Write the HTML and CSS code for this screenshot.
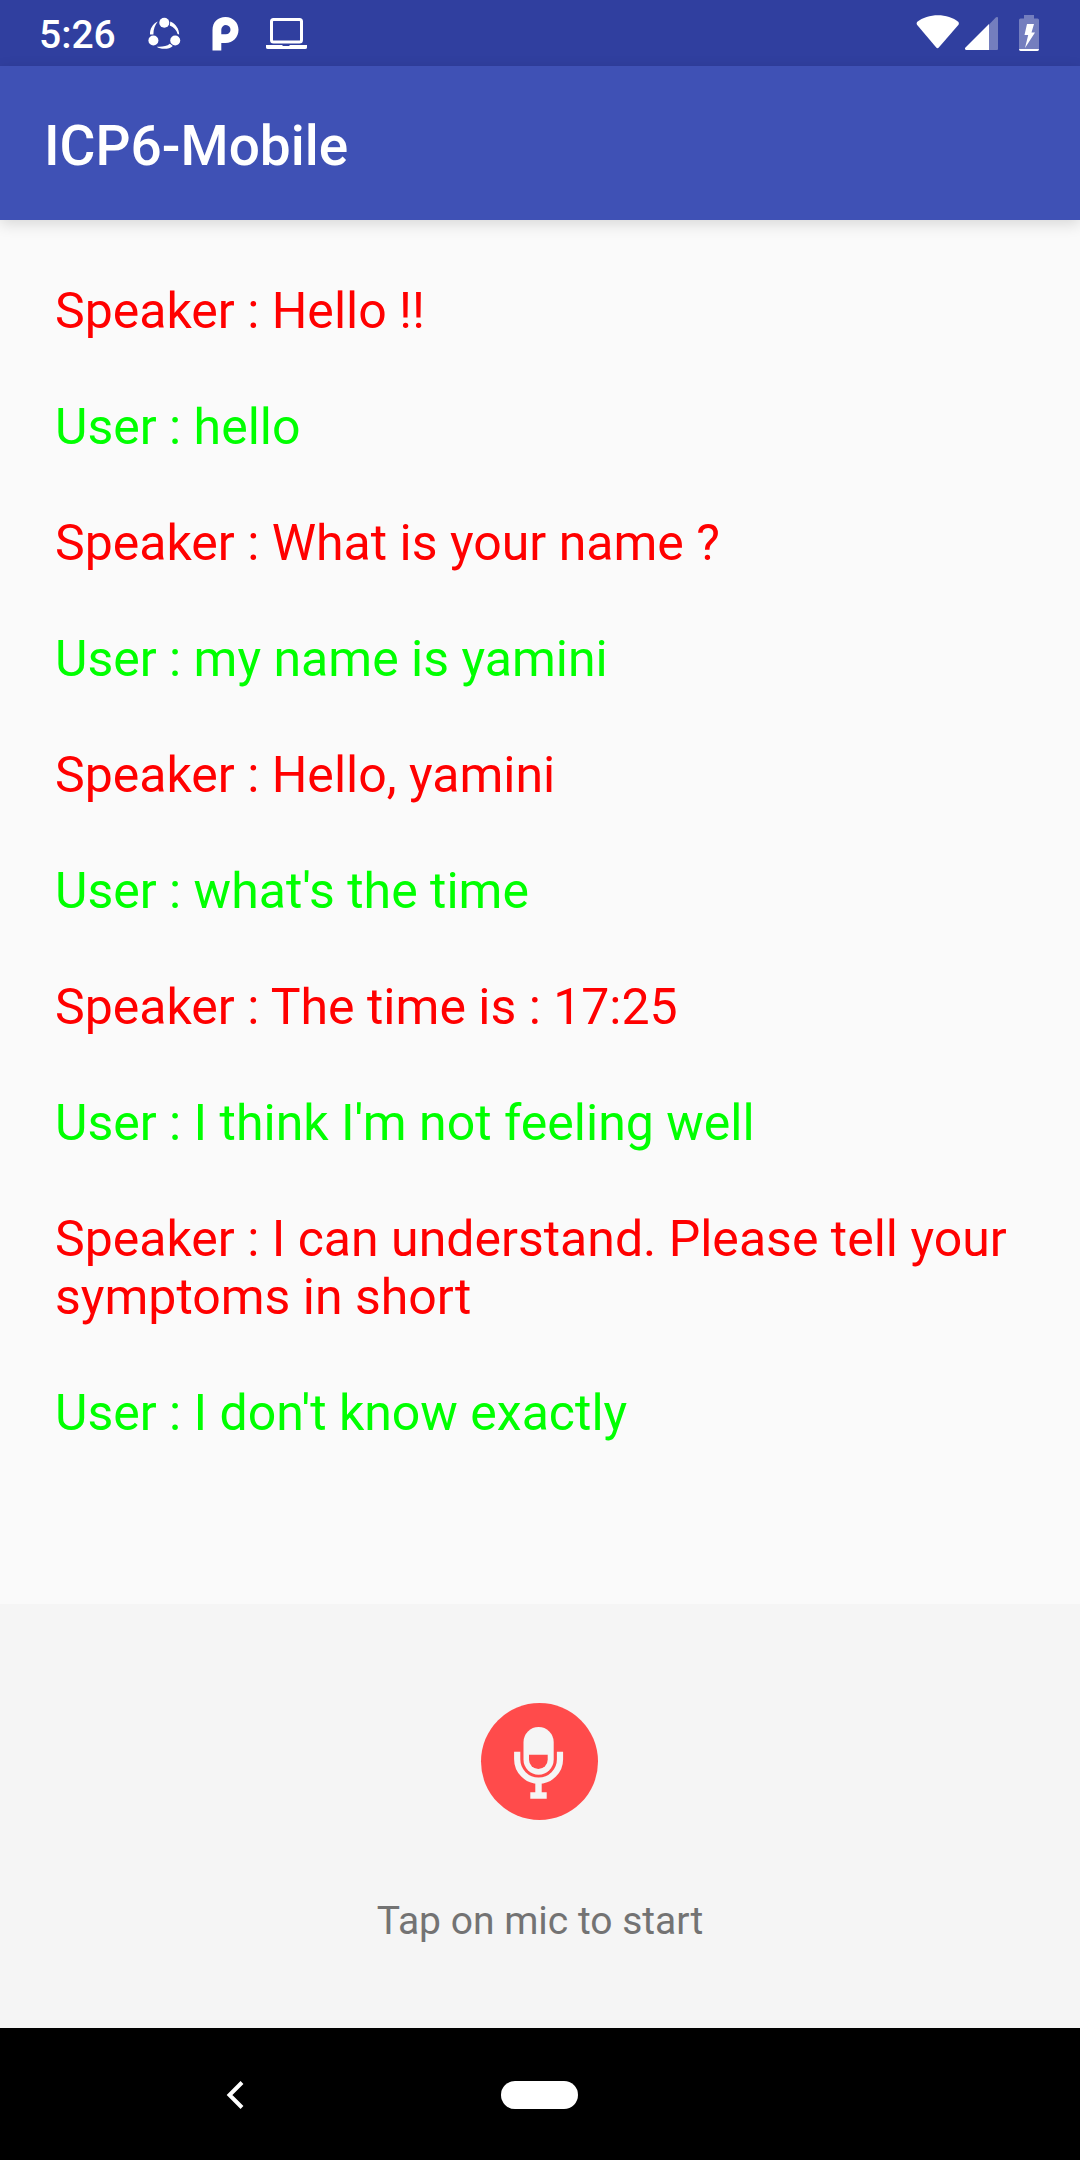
FILE: index.html
```html
<!DOCTYPE html>
<html lang="en">
<head>
  <meta charset="utf-8">
  <meta name="viewport" content="width=device-width, initial-scale=1">
  <title>ICP6-Mobile</title>
  <link rel="stylesheet" href="styles.css">
</head>
<body>
  <div class="status-bar">
    <div class="status-group status-group-left">
      <time class="clock">5:26</time>
      <svg class="status-icon" width="44" height="66" viewBox="142 0 44 66" aria-hidden="true">
        <g fill="#fff">
          <circle cx="164.300" cy="22.700" r="5"/>
          <circle cx="153.400" cy="40.500" r="5"/>
          <circle cx="175.200" cy="40.500" r="5"/>
          <path d="M157.800 21.600C152.500 24.200 149.800 29 150 34.600L153.400 34.600C153.400 29 155 25.200 157.800 21.600Z"/>
          <path d="M170.300 21.600C176 24.200 179 29 179.200 34.600L177.600 34C176.600 30 174 27.200 169.800 25.400Z"/>
          <path d="M156.800 46.700C160 49.700 169.500 49.700 172.800 46L169.800 43.800C166.800 46.600 161.500 47 156.800 46.700Z"/>
        </g>
      </svg>
      <svg class="status-icon" width="28" height="66" viewBox="212 0 28 66" aria-hidden="true">
        <path fill="#fff" fill-rule="evenodd" d="M212.500 50.500V30C212.500 22 218 17 225.500 17C233 17 238.500 22.500 238.500 29.800C238.500 37.500 233 43 225.500 43H221.300V50.500ZM221.300 34.300H225.500A4.600 4.600 0 1 0 221.300 29.800Z"/>
      </svg>
      <svg class="status-icon" width="42" height="66" viewBox="266 0 42 66" aria-hidden="true">
        <rect x="271.500" y="19.500" width="30" height="22.500" rx="2" fill="none" stroke="#fff" stroke-width="3"/>
        <path fill="#fff" d="M266 45H282L283 46H289L290 45H307V47.500Q307 49 305 49H268Q266 49 266 47.500Z"/>
      </svg>
    </div>
    <div class="status-group status-group-right">
      <svg class="status-icon" width="44" height="66" viewBox="916 0 44 66" aria-hidden="true">
        <path fill="#fff" d="M917 22C928 13 948 13 958.500 22Q959.300 23.500 958.500 24.700L939 47.300Q937.500 49 936 47.300L917 24.700Q916.200 23.500 917 22Z"/>
      </svg>
      <svg class="status-icon" width="36" height="66" viewBox="964 0 36 66" aria-hidden="true">
        <path fill="#fff" fill-opacity=".33" d="M989 24.500L996 17.300Q998 16.500 998 18V49Q998 50 997 50H989Z"/>
        <path fill="#fff" d="M989 24V50H966Q964.500 49.500 965 48Z"/>
      </svg>
      <svg class="status-icon" width="36" height="66" viewBox="1004 0 36 66" aria-hidden="true">
        <path fill="#fff" fill-opacity=".33" d="M1024 15H1034V18.500H1037.500Q1039 18.500 1039 20V49H1019V20Q1019 18.500 1020.500 18.500H1024Z"/>
        <path fill="#fff" d="M1019 49H1039Q1039 51 1037.500 51H1020.500Q1019 51 1019 49Z"/>
        <path fill="#fff" d="M1027 24H1034L1031.500 32.500H1035L1025 48L1028.200 35H1024.500Z"/>
      </svg>
    </div>
  </div>

  <header class="app-bar">
    <h1 class="app-title">ICP6-Mobile</h1>
  </header>

  <main class="chat">
    <p class="message speaker">Speaker : Hello !!</p>
    <p class="message user">User : hello</p>
    <p class="message speaker">Speaker : What is your name ?</p>
    <p class="message user">User : my name is yamini</p>
    <p class="message speaker">Speaker : Hello, yamini</p>
    <p class="message user">User : what's the time</p>
    <p class="message speaker">Speaker : The time is : 17:25</p>
    <p class="message user">User : I think I'm not feeling well</p>
    <p class="message speaker">Speaker : I can understand. Please tell your symptoms in short</p>
    <p class="message user">User : I don't know exactly</p>
  </main>

  <section class="mic-panel">
    <button class="mic-button" type="button" aria-labelledby="mic-hint">
      <svg width="120" height="120" viewBox="0 0 120 120" aria-hidden="true">
        <circle cx="59.500" cy="59.500" r="58.500" fill="#ff4b4b"/>
        <rect x="43.500" y="25" width="30.200" height="47.700" rx="15.100" fill="#f5f5f5"/>
        <path fill="#ff4b4b" d="M49 52.700H67.700V57.700A9.350 9.350 0 0 1 49 57.700Z"/>
        <path fill="none" stroke="#f5f5f5" stroke-width="6.200" d="M37.200 49.700V57.300A21.400 21.400 0 0 0 80 57.300V49.700"/>
        <path fill="#f5f5f5" d="M55.300 80H61.700V90.300H66.700V96.700H50.300V90.300H55.300Z"/>
      </svg>
    </button>
    <p class="mic-hint" id="mic-hint">Tap on mic to start</p>
  </section>

  <nav class="nav-bar">
    <button class="nav-button" type="button" aria-label="Back">
      <svg width="20" height="32" viewBox="0 0 20 32" aria-hidden="true">
        <path d="M17 3.500L4.500 16L17 28.500" fill="none" stroke="#fff" stroke-width="4"/>
      </svg>
    </button>
    <button class="nav-button" type="button" aria-label="Home"><span class="home-pill"></span></button>
  </nav>
</body>
</html>
```
FILE: styles.css
```css
* {
  box-sizing: border-box;
}

body {
  margin: 0;
  min-height: 100vh;
  display: flex;
  flex-direction: column;
  background: #fafafa;
  font-family: Roboto, "Liberation Sans", sans-serif;
}

button {
  padding: 0;
  border: 0;
  background: none;
}

svg {
  display: block;
}

.status-bar {
  display: flex;
  justify-content: space-between;
  height: 66px;
  padding: 0 40px 0 39px;
  background: #303f9f;
  color: #fff;
}

.status-group {
  display: flex;
  align-items: center;
}

.status-group-left {
  gap: 26px;
}

.status-group-right {
  gap: 4px;
}

.clock {
  padding-top: 4px;
  font-size: 39px;
  font-weight: 500;
  line-height: 46px;
}

.app-bar {
  display: flex;
  align-items: center;
  height: 154px;
  padding: 6px 44px 0;
  background: #3f51b5;
  color: #fff;
  box-shadow: 0 4px 14px rgba(0, 0, 0, 0.14);
}

.app-title {
  margin: 0;
  font-size: 55px;
  font-weight: 500;
  line-height: 64px;
}

.chat {
  flex: 1;
  display: flex;
  flex-direction: column;
  gap: 58px;
  padding: 62px 55px;
}

.message {
  margin: 0;
  font-size: 50px;
  line-height: 58px;
}

.speaker {
  color: #f00;
}

.user {
  color: #0f0;
}

.mic-panel {
  display: flex;
  flex-direction: column;
  align-items: center;
  gap: 76px;
  padding: 98px 55px 84px;
  background: #f5f5f5;
}

.mic-button {
  border-radius: 50%;
}

.mic-hint {
  margin: 0;
  color: #737373;
  font-size: 39px;
  line-height: 46px;
}

.nav-bar {
  display: grid;
  grid-template-columns: repeat(3, 1fr);
  height: 132px;
  padding: 1px 82px 0;
  background: #000;
}

.nav-button {
  display: flex;
  align-items: center;
  justify-content: center;
}

.home-pill {
  width: 77px;
  height: 28px;
  border-radius: 14px;
  background: #fff;
}
```
